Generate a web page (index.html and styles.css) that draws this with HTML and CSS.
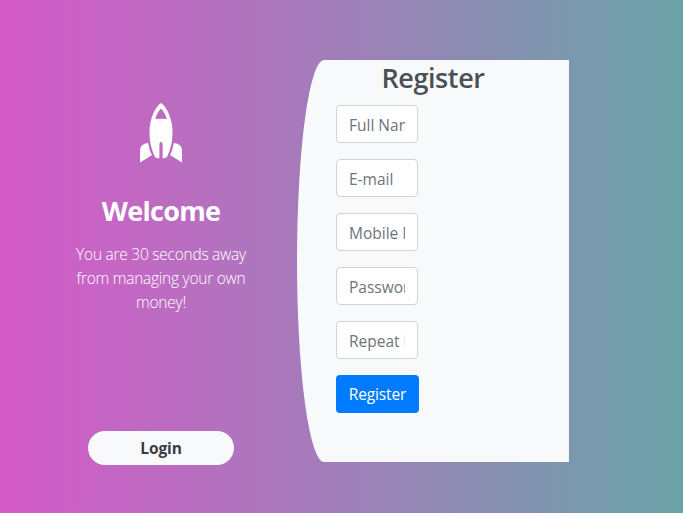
FILE: index.html
```html
<!DOCTYPE html>
<html lang="en">
<head>
<meta charset="utf-8">
<title>Register</title>
<link rel="stylesheet" href="styles.css">
</head>
<body>
<main class="register">
  <section class="intro">
    <svg class="rocket" viewBox="0 0 42 60" aria-hidden="true">
      <path fill="#fff" fill-rule="evenodd" d="M21 0C27 4 32.500 16 32.500 29C32.500 39 30.500 46 27.500 53Q26.500 55.300 22.600 55.300V41Q22.600 39 21 39Q19.400 39 19.400 41V55.300Q15.500 55.300 14.500 53C11.500 46 9.500 39 9.500 29C9.500 16 15 4 21 0ZM21 5.500C18.500 8 16.500 11.500 15.300 16Q21 15.600 26.700 16C25.500 11.500 23.500 8 21 5.500Z"/>
      <path fill="#fff" d="M8.300 40C9 45 10 49 12 52L0 59.500V47Q0 41 8.300 40ZM33.700 40C33 45 32 49 30 52L42 59.500V47Q42 41 33.700 40Z"/>
    </svg>
    <h3 class="welcome">Welcome</h3>
    <p class="tagline">You are 30 seconds away<br>from managing your own<br>money!</p>
    <button class="login" type="button">Login</button>
  </section>
  <section class="panel">
    <h3 class="heading">Register</h3>
    <form class="form">
      <input type="text" placeholder="Full Name *">
      <input type="text" placeholder="E-mail">
      <input type="text" placeholder="Mobile Number">
      <input type="text" placeholder="Password *">
      <input type="text" placeholder="Repeat Password *">
      <button class="submit" type="button">Register</button>
    </form>
  </section>
</main>
</body>
</html>
```
FILE: styles.css
```css
* { box-sizing: border-box; }
body {
  margin: 0;
  height: 513px;
  overflow: hidden;
  background: linear-gradient(to right, #d75aca, #69a3a7);
  font-family: "Open Sans", sans-serif;
  font-size: 16px;
  line-height: 24px;
}
.register { display: flex; padding: 60px 0 0 55px; }
.intro {
  width: 212px;
  margin-right: 30px;
  padding-top: 43px;
  display: flex;
  flex-direction: column;
  align-items: center;
  color: #fff;
  text-align: center;
}
.rocket { display: block; width: 42px; height: 60px; }
.welcome {
  margin: 31px 0 0;
  font-size: 27px;
  line-height: 34px;
  font-weight: 700;
  letter-spacing: -0.7px;
}
.tagline {
  margin: 14px 0 0;
  height: 72px;
  font-weight: 300;
  font-size: 15.5px;
  letter-spacing: -0.25px;
  white-space: nowrap;
}
.login {
  width: 146px;
  height: 34px;
  margin-top: 117px;
  padding: 0;
  border: 0;
  border-radius: 17px;
  background: #f8f9fa;
  color: #383d41;
  font: 700 15.5px/34px "Open Sans", sans-serif;
  letter-spacing: -0.1px;
}
.panel {
  width: 272px;
  height: 402px;
  background: #f8f9fa;
  border-radius: 10% 0 0 10% / 50% 0 0 50%;
}
.heading {
  margin: 1px 0 0;
  color: #495057;
  text-align: center;
  font-size: 27px;
  line-height: 34px;
  font-weight: 600;
  letter-spacing: -0.4px;
}
.form {
  display: flex;
  flex-direction: column;
  align-items: flex-start;
  gap: 16px;
  padding: 10px 0 0 39px;
}
.form input {
  width: 82px;
  height: 38px;
  padding: 7px 12px 5px;
  border: 1px solid #ced4da;
  border-radius: 4px;
  background: #fff;
  font: 400 15.5px/24px "Open Sans", sans-serif;
}
.form input::placeholder { color: #6c757d; opacity: 1; }
.submit {
  width: 83px;
  height: 38px;
  padding: 0;
  border: 0;
  border-radius: 4px;
  background: #007bff;
  color: #fff;
  font: 400 15.5px/36px "Open Sans", sans-serif;
  letter-spacing: -0.15px;
}
```
